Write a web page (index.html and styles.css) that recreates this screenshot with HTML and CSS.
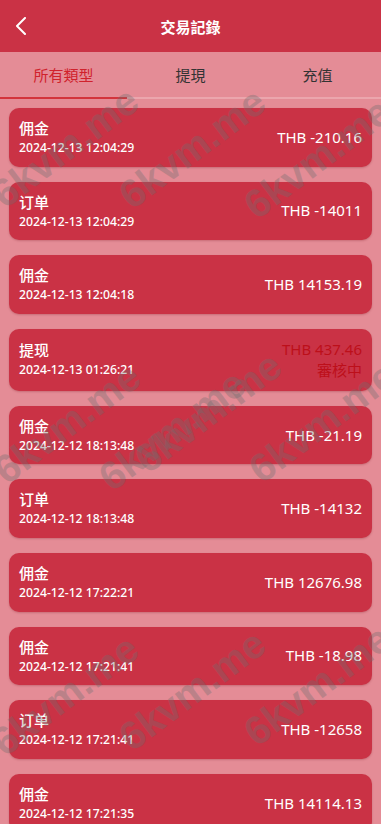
FILE: index.html
```html
<!DOCTYPE html>
<html lang="zh">
<head>
<meta charset="utf-8">
<meta name="viewport" content="width=device-width, initial-scale=1">
<title>交易記錄</title>
<link rel="stylesheet" href="styles.css">
</head>
<body>
<header class="topbar">
  <span class="back">
    <svg width="12" height="18" viewBox="0 0 12 18"><polyline points="10,1 2,9 10,17" fill="none" stroke="#fff" stroke-width="2" stroke-linecap="round" stroke-linejoin="round"/></svg>
  </span>
  <h1 class="title">交易記錄</h1>
  <span class="spacer"></span>
</header>
<nav class="tabs">
  <div class="tab active">所有類型</div>
  <div class="tab">提現</div>
  <div class="tab">充值</div>
</nav>
<main class="list">
  <div class="card"><div class="info"><div class="kind">佣金</div><div class="time">2024-12-13 12:04:29</div></div><div class="amount">THB -210.16</div></div>
  <div class="card"><div class="info"><div class="kind">订单</div><div class="time">2024-12-13 12:04:29</div></div><div class="amount">THB -14011</div></div>
  <div class="card"><div class="info"><div class="kind">佣金</div><div class="time">2024-12-13 12:04:18</div></div><div class="amount">THB 14153.19</div></div>
  <div class="card"><div class="info"><div class="kind">提现</div><div class="time">2024-12-13 01:26:21</div></div><div class="amount pending"><div>THB 437.46</div><div>審核中</div></div></div>
  <div class="card"><div class="info"><div class="kind">佣金</div><div class="time">2024-12-12 18:13:48</div></div><div class="amount">THB -21.19</div></div>
  <div class="card"><div class="info"><div class="kind">订单</div><div class="time">2024-12-12 18:13:48</div></div><div class="amount">THB -14132</div></div>
  <div class="card"><div class="info"><div class="kind">佣金</div><div class="time">2024-12-12 17:22:21</div></div><div class="amount">THB 12676.98</div></div>
  <div class="card"><div class="info"><div class="kind">佣金</div><div class="time">2024-12-12 17:21:41</div></div><div class="amount">THB -18.98</div></div>
  <div class="card"><div class="info"><div class="kind">订单</div><div class="time">2024-12-12 17:21:41</div></div><div class="amount">THB -12658</div></div>
  <div class="card"><div class="info"><div class="kind">佣金</div><div class="time">2024-12-12 17:21:35</div></div><div class="amount">THB 14114.13</div></div>
</main>
<div class="watermarks">
  <span class="wm" style="left:65px;top:147px">6kvm.me</span>
  <span class="wm" style="left:192px;top:148px">6kvm.me</span>
  <span class="wm" style="left:317px;top:158px">6kvm.me</span>
  <span class="wm" style="left:67px;top:423px">6kvm.me</span>
  <span class="wm" style="left:172px;top:430px">6kvm.me</span>
  <span class="wm" style="left:208px;top:412px">6kvm.me</span>
  <span class="wm" style="left:322px;top:422px">6kvm.me</span>
  <span class="wm" style="left:65px;top:695px">6kvm.me</span>
  <span class="wm" style="left:192px;top:690px">6kvm.me</span>
  <span class="wm" style="left:317px;top:685px">6kvm.me</span>
</div>
</body>
</html>
```
FILE: styles.css
```css
* { box-sizing: border-box; }
html, body { margin: 0; padding: 0; }
body {
  background: #e48c96;
  font-family: "Noto Sans", "Noto Sans CJK SC", sans-serif;
  color: #fff;
  position: relative;
  min-height: 824px;
}
.topbar {
  height: 52px;
  background: #ca3245;
  display: grid;
  grid-template-columns: 60px 1fr 60px;
  align-items: center;
}
.back {
  display: flex;
  align-items: center;
  padding-left: 15px;
  height: 52px;
}
.back svg { display: block; }
.title {
  margin: 0;
  text-align: center;
  font-size: 15px;
  font-weight: 700;
  font-family: "Noto Sans CJK TC", "Noto Sans CJK SC", sans-serif;
  color: #fff;
}
.tabs {
  display: grid;
  grid-template-columns: 1fr 1fr 1fr;
  height: 47px;
  border-bottom: 2px solid #eba6ad;
}
.tab {
  display: flex;
  align-items: center;
  justify-content: center;
  font-size: 15px;
  color: #333;
  font-family: "Noto Sans CJK TC", "Noto Sans CJK SC", sans-serif;
  margin-bottom: -2px;
  border-bottom: 2px solid transparent;
}
.tab.active {
  color: #d0222c;
  border-bottom-color: #d3343c;
}
.list {
  padding: 9px 9px 20px;
  display: flex;
  flex-direction: column;
  gap: 15px;
}
.card {
  background: #ca3245;
  border-radius: 10px;
  min-height: 58.6px;
  padding: 10px 10px;
  display: flex;
  align-items: center;
  justify-content: space-between;
  box-shadow: 0 1px 2px rgba(120, 20, 30, 0.25);
}
.kind {
  font-size: 15px;
  line-height: 21px;
  font-weight: 500;
}
.time {
  font-size: 12.2px;
  line-height: 17.6px;
  font-weight: 500;
}
.amount {
  font-size: 15px;
  line-height: 21px;
  text-align: right;
}
.amount.pending {
  color: #bd0f1a;
}
.watermarks {
  position: absolute;
  left: 0;
  top: 0;
  width: 381px;
  height: 824px;
  overflow: hidden;
  pointer-events: none;
}
.wm {
  position: absolute;
  transform: translate(-50%, -50%) rotate(-37deg);
  font-family: "Liberation Sans", Arial, sans-serif;
  font-size: 40px;
  font-weight: 700;
  color: rgba(110, 110, 110, 0.34);
  white-space: nowrap;
  line-height: 1;
}
```
